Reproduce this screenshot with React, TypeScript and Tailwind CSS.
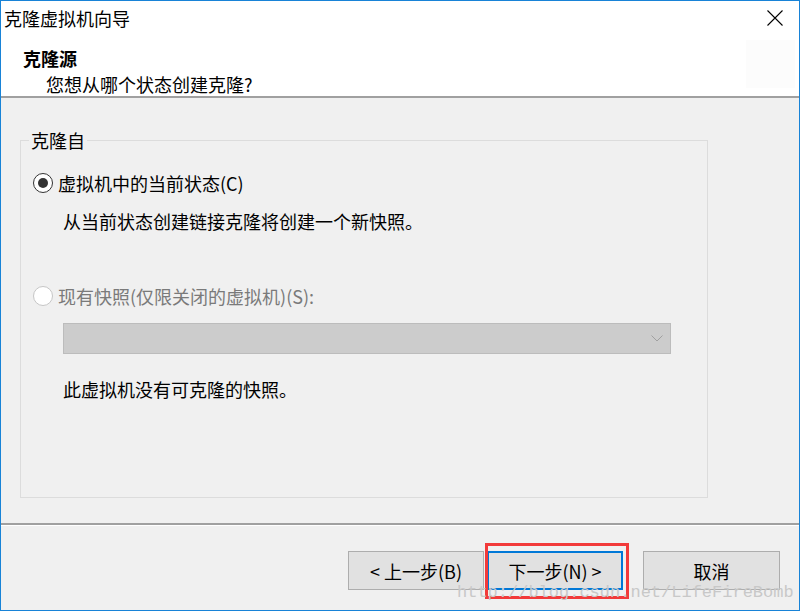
import React from "react";

const font = { fontFamily: '"Noto Sans CJK SC", "Noto Sans", sans-serif' };

function Radio({ checked, disabled }: { checked?: boolean; disabled?: boolean }) {
  return (
    <div
      className={`w-[20px] h-[20px] rounded-full border-[1.5px] flex items-center justify-center shrink-0 ${
        disabled ? "border-[#c6c6c6] bg-white" : "border-[#333333] bg-white"
      }`}
    >
      {checked && <div className="w-[10px] h-[10px] rounded-full bg-[#333333]" />}
    </div>
  );
}

export default function App() {
  return (
    <div
      className="w-[800px] h-[611px] border border-[#1883d7] bg-[#f0f0f0] flex flex-col overflow-hidden text-black text-[18px] leading-[24px] relative"
      style={font}
    >
      {/* Header */}
      <div className="h-[95px] bg-white flex flex-col shrink-0">
        <div className="h-[36px] flex items-center justify-between pl-[3px] pr-[16px]">
          <span>克隆虚拟机向导</span>
          <svg width="16" height="16" viewBox="0 0 16 16">
            <path d="M0.5 0.5 L15.5 15.5 M15.5 0.5 L0.5 15.5" stroke="#000" strokeWidth="1.1" fill="none" />
          </svg>
        </div>
        <div className="flex justify-between pr-[4px]">
          <div className="flex flex-col">
            <div className="pl-[22px] mt-[11px] font-bold">克隆源</div>
            <div className="pl-[45px] mt-[2px]">您想从哪个状态创建克隆?</div>
          </div>
          <div className="w-[49px] h-[48px] mt-[5px] bg-[#fcfcfc]" />
        </div>
      </div>
      <div className="h-[2px] bg-[#a0a0a0] shrink-0" />

      {/* Body */}
      <div className="h-[425px] shrink-0 pl-[19px] pt-[42px]">
        <div className="relative w-[688px] h-[358px] border border-[#dcdcdc] pl-[12px] pt-[30px]">
          <span className="absolute left-[8px] -top-[13px] px-[2px] bg-[#f0f0f0]">克隆自</span>
          <div className="h-[24px] flex items-center gap-[5px]">
            <Radio checked />
            <span>虚拟机中的当前状态(C)</span>
          </div>
          <div className="mt-[14px] pl-[30px]">从当前状态创建链接克隆将创建一个新快照。</div>
          <div className="mt-[51px] h-[24px] flex items-center gap-[5px] text-[#7a7a7a]">
            <Radio disabled />
            <span>现有快照(仅限关闭的虚拟机)(S):</span>
          </div>
          <div className="mt-[15px] ml-[30px] w-[608px] h-[31px] bg-[#cccccc] border border-[#bcbcbc] flex items-center justify-end pr-[7px]">
            <svg width="12" height="7" viewBox="0 0 12 7">
              <path d="M0.5 0.5 L6 6 L11.5 0.5" stroke="#a0a0a0" strokeWidth="1" fill="none" />
            </svg>
          </div>
          <div className="mt-[23px] pl-[30px]">此虚拟机没有可克隆的快照。</div>
        </div>
      </div>

      {/* Separator */}
      <div className="h-[2px] bg-[#a0a0a0] shrink-0" />
      <div className="h-[1px] bg-white shrink-0" />

      {/* Footer */}
      <div className="flex-1 flex justify-end items-start pt-[25px] pr-[19px]">
        <button className="w-[136px] h-[39px] bg-[#e1e1e1] border border-[#adadad] flex items-center justify-center">
          &lt; 上一步(B)
        </button>
        <div className="relative ml-[3px]">
          <button className="w-[136px] h-[39px] bg-[#e1e1e1] border-2 border-[#0078d7] flex items-center justify-center">
            下一步(N) &gt;
          </button>
          <div className="absolute -left-[2px] -top-[8px] w-[144px] h-[56px] border-[3px] border-[#f23a3a] pointer-events-none" />
        </div>
        <button className="ml-[20px] w-[137px] h-[39px] bg-[#e1e1e1] border border-[#adadad] flex items-center justify-center">
          取消
        </button>
      </div>

      {/* Watermark */}
      <div
        className="absolute left-[456px] top-[582px] text-[17px] leading-[20px] text-[#c8c8c8] pointer-events-none"
        style={{ fontFamily: '"Liberation Mono", monospace' }}
      >
        http://blog.csdn.net/LifeFireBomb
      </div>
    </div>
  );
}
